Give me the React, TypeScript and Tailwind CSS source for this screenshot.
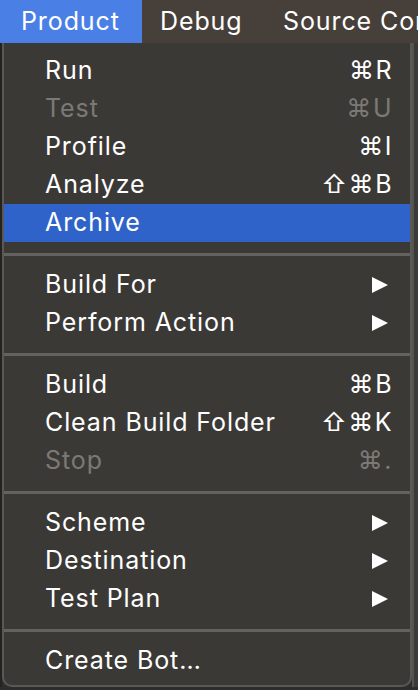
import React from 'react';

type Item =
  | { kind: 'item'; label: string; shortcut?: string; disabled?: boolean; active?: boolean; submenu?: boolean }
  | { kind: 'sep' };

const items: Item[] = [
  { kind: 'item', label: 'Run', shortcut: '⌘R' },
  { kind: 'item', label: 'Test', shortcut: '⌘U', disabled: true },
  { kind: 'item', label: 'Profile', shortcut: '⌘I' },
  { kind: 'item', label: 'Analyze', shortcut: '⇧⌘B' },
  { kind: 'item', label: 'Archive', active: true },
  { kind: 'sep' },
  { kind: 'item', label: 'Build For', submenu: true },
  { kind: 'item', label: 'Perform Action', submenu: true },
  { kind: 'sep' },
  { kind: 'item', label: 'Build', shortcut: '⌘B' },
  { kind: 'item', label: 'Clean Build Folder', shortcut: '⇧⌘K' },
  { kind: 'item', label: 'Stop', shortcut: '⌘.', disabled: true },
  { kind: 'sep' },
  { kind: 'item', label: 'Scheme', submenu: true },
  { kind: 'item', label: 'Destination', submenu: true },
  { kind: 'item', label: 'Test Plan', submenu: true },
  { kind: 'sep' },
  { kind: 'item', label: 'Create Bot…' },
];

const Arrow = () => (
  <svg width="18" height="18" viewBox="0 0 18 18" className="mr-[4px]">
    <path d="M1 1 L17 9 L1 17 Z" fill="currentColor" />
  </svg>
);

export default function App() {
  return (
    <div
      className="w-[418px] h-[690px] bg-[#2f2d2b] overflow-hidden"
      style={{ fontFamily: 'Inter, "Noto Sans", "DejaVu Sans", sans-serif' }}
    >
      {/* Menu bar */}
      <div className="flex h-[43px] bg-[#47403a] text-white text-[25px] tracking-[0.9px] items-center overflow-hidden">
        <div className="h-full shrink-0 flex items-center bg-[#4a80e6] pl-[21px] w-[142px]">Product</div>
        <div className="shrink-0 pl-[18px] w-[141px]">Debug</div>
        <div className="shrink-0 whitespace-nowrap">Source Control</div>
      </div>

      {/* Dropdown */}
      <div className="flex">
        <div className="w-[2px] bg-[#242322]" />
        <div className="w-[410px] h-[644px] bg-[#3b3936] border-x-2 border-b-2 border-[#5a5855] rounded-b-[10px] pt-[9px]">
          {items.map((it, i) =>
            it.kind === 'sep' ? (
              <div key={i} className="h-[24px] flex items-center">
                <div className="h-[3px] w-full bg-[#64625f]" />
              </div>
            ) : (
              <div
                key={i}
                className={`h-[38px] flex items-center justify-between pl-[41px] pr-[17px] text-[25px] tracking-[0.9px] ${
                  it.active ? 'bg-[#2f63c9]' : ''
                } ${it.disabled ? 'text-[#7b7976]' : 'text-white'}`}
              >
                <span>{it.label}</span>
                {it.shortcut && <span className="tracking-[1.5px]">{it.shortcut}</span>}
                {it.submenu && <Arrow />}
              </div>
            )
          )}
        </div>
        <div className="flex-1 bg-[#3c3a37] border-l-2 border-[#55534f]" />
      </div>
    </div>
  );
}
